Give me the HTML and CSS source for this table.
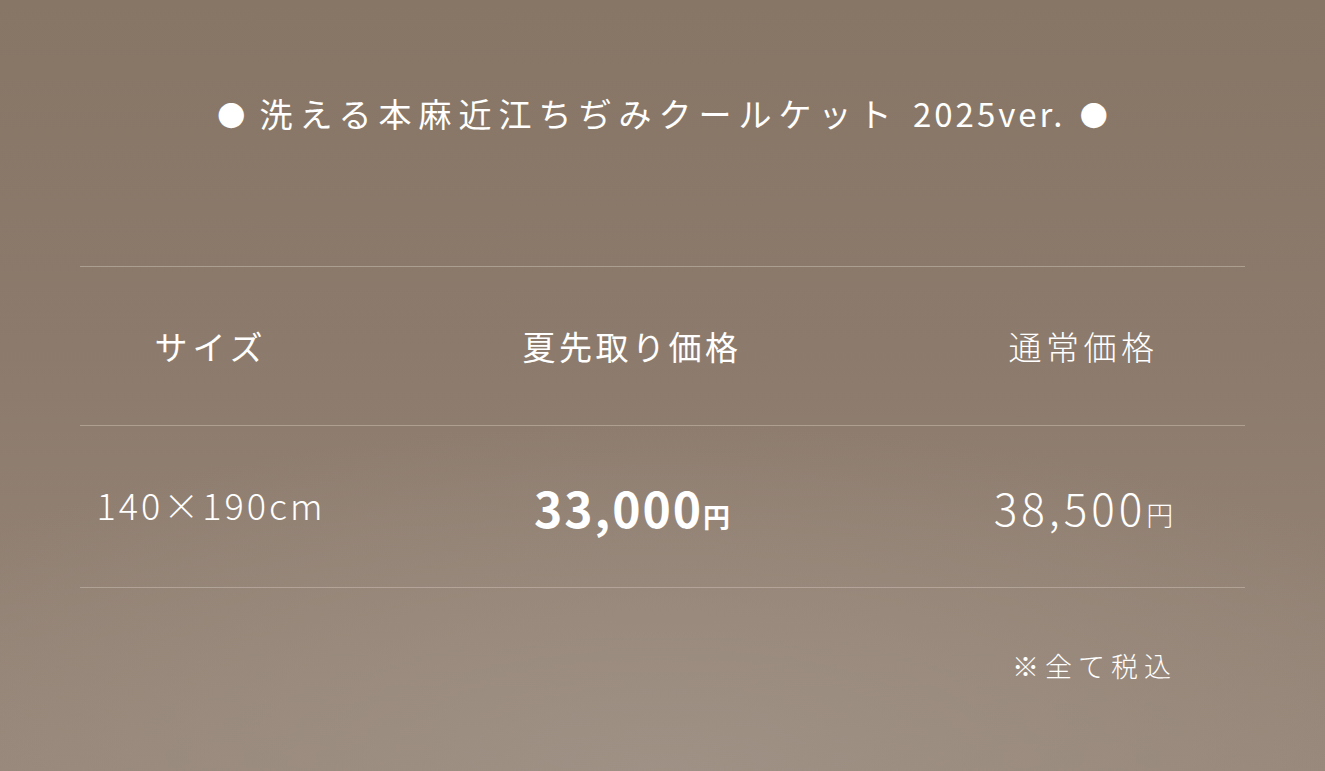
FILE: index.html
```html
<!DOCTYPE html>
<html lang="ja">
<head>
    <meta charset="UTF-8">
    <title>洗える本麻近江ちぢみクールケット 価格表</title>
    <link rel="stylesheet" href="styles.css">
</head>
<body>
    <div class="price">
        <h2 class="price-title"><span class="dot">●</span> 洗える本麻近江ちぢみクールケット <span class="ver">2025ver.</span> <span class="dot">●</span></h2>
        <div class="price-table">
            <div class="row head">
                <div class="cell c1">サイズ</div>
                <div class="cell c2">夏先取り価格</div>
                <div class="cell c3">通常価格</div>
            </div>
            <div class="row body">
                <div class="cell c1 size">140×190cm</div>
                <div class="cell c2 sale">33,000<span class="yen">円</span></div>
                <div class="cell c3 normal">38,500<span class="yen">円</span></div>
            </div>
        </div>
        <p class="note">※全て税込</p>
    </div>
</body>
</html>
```

FILE: styles.css
```css
html, body, h2, p{margin: 0;padding: 0;}
body{
    font-family: "Noto Sans CJK JP", "Noto Sans", sans-serif;
    color: #fff;
    height: 771px;
    overflow: hidden;
    background:
        radial-gradient(ellipse 70% 45% at 50% 100%, rgba(160,146,134,0.9), rgba(160,146,134,0) 100%),
        linear-gradient(180deg, #877666 0%, #8c7b6c 45%, #968679 100%);
}
.price{padding: 0 80px;}
.price-title{
    padding-top: 89px;
    height: 48px;
    line-height: 48px;
    text-align: center;
    font-size: 33px;
    font-weight: 400;
    letter-spacing: 7px;
}
.price-title .dot{font-size: 28px;letter-spacing: 0;}
.price-title .ver{letter-spacing: 3px;}
.price-table{margin-top: 129px;}
.row{
    display: grid;
    grid-template-columns: 262px 580px 1fr;
    align-items: center;
    border-top: 1px solid rgba(200,188,176,0.55);
}
.row.head{height: 158px;}
.row.body{height: 161px;border-bottom: 1px solid rgba(200,188,176,0.55);}
.cell{text-align: center;}
.head .cell{font-size: 33px;letter-spacing: 3.5px;font-weight: 400;}
.head .c1{letter-spacing: 5px;}
.head .c3{font-weight: 300;letter-spacing: 4.5px;}
.size{font-size: 36px;font-weight: 300;letter-spacing: 3px;padding-bottom: 6px;}
.sale{font-size: 48px;font-weight: 700;letter-spacing: 2px;}
.normal{font-size: 44px;font-weight: 300;letter-spacing: 4px;}
.yen{font-size: 27px;letter-spacing: 0;}
.sale .yen{font-weight: 700;}
.normal .yen{font-weight: 300;}
.note{
    margin-top: 58px;
    padding-right: 68px;
    text-align: right;
    font-size: 27px;
    font-weight: 300;
    letter-spacing: 6px;
}
```
